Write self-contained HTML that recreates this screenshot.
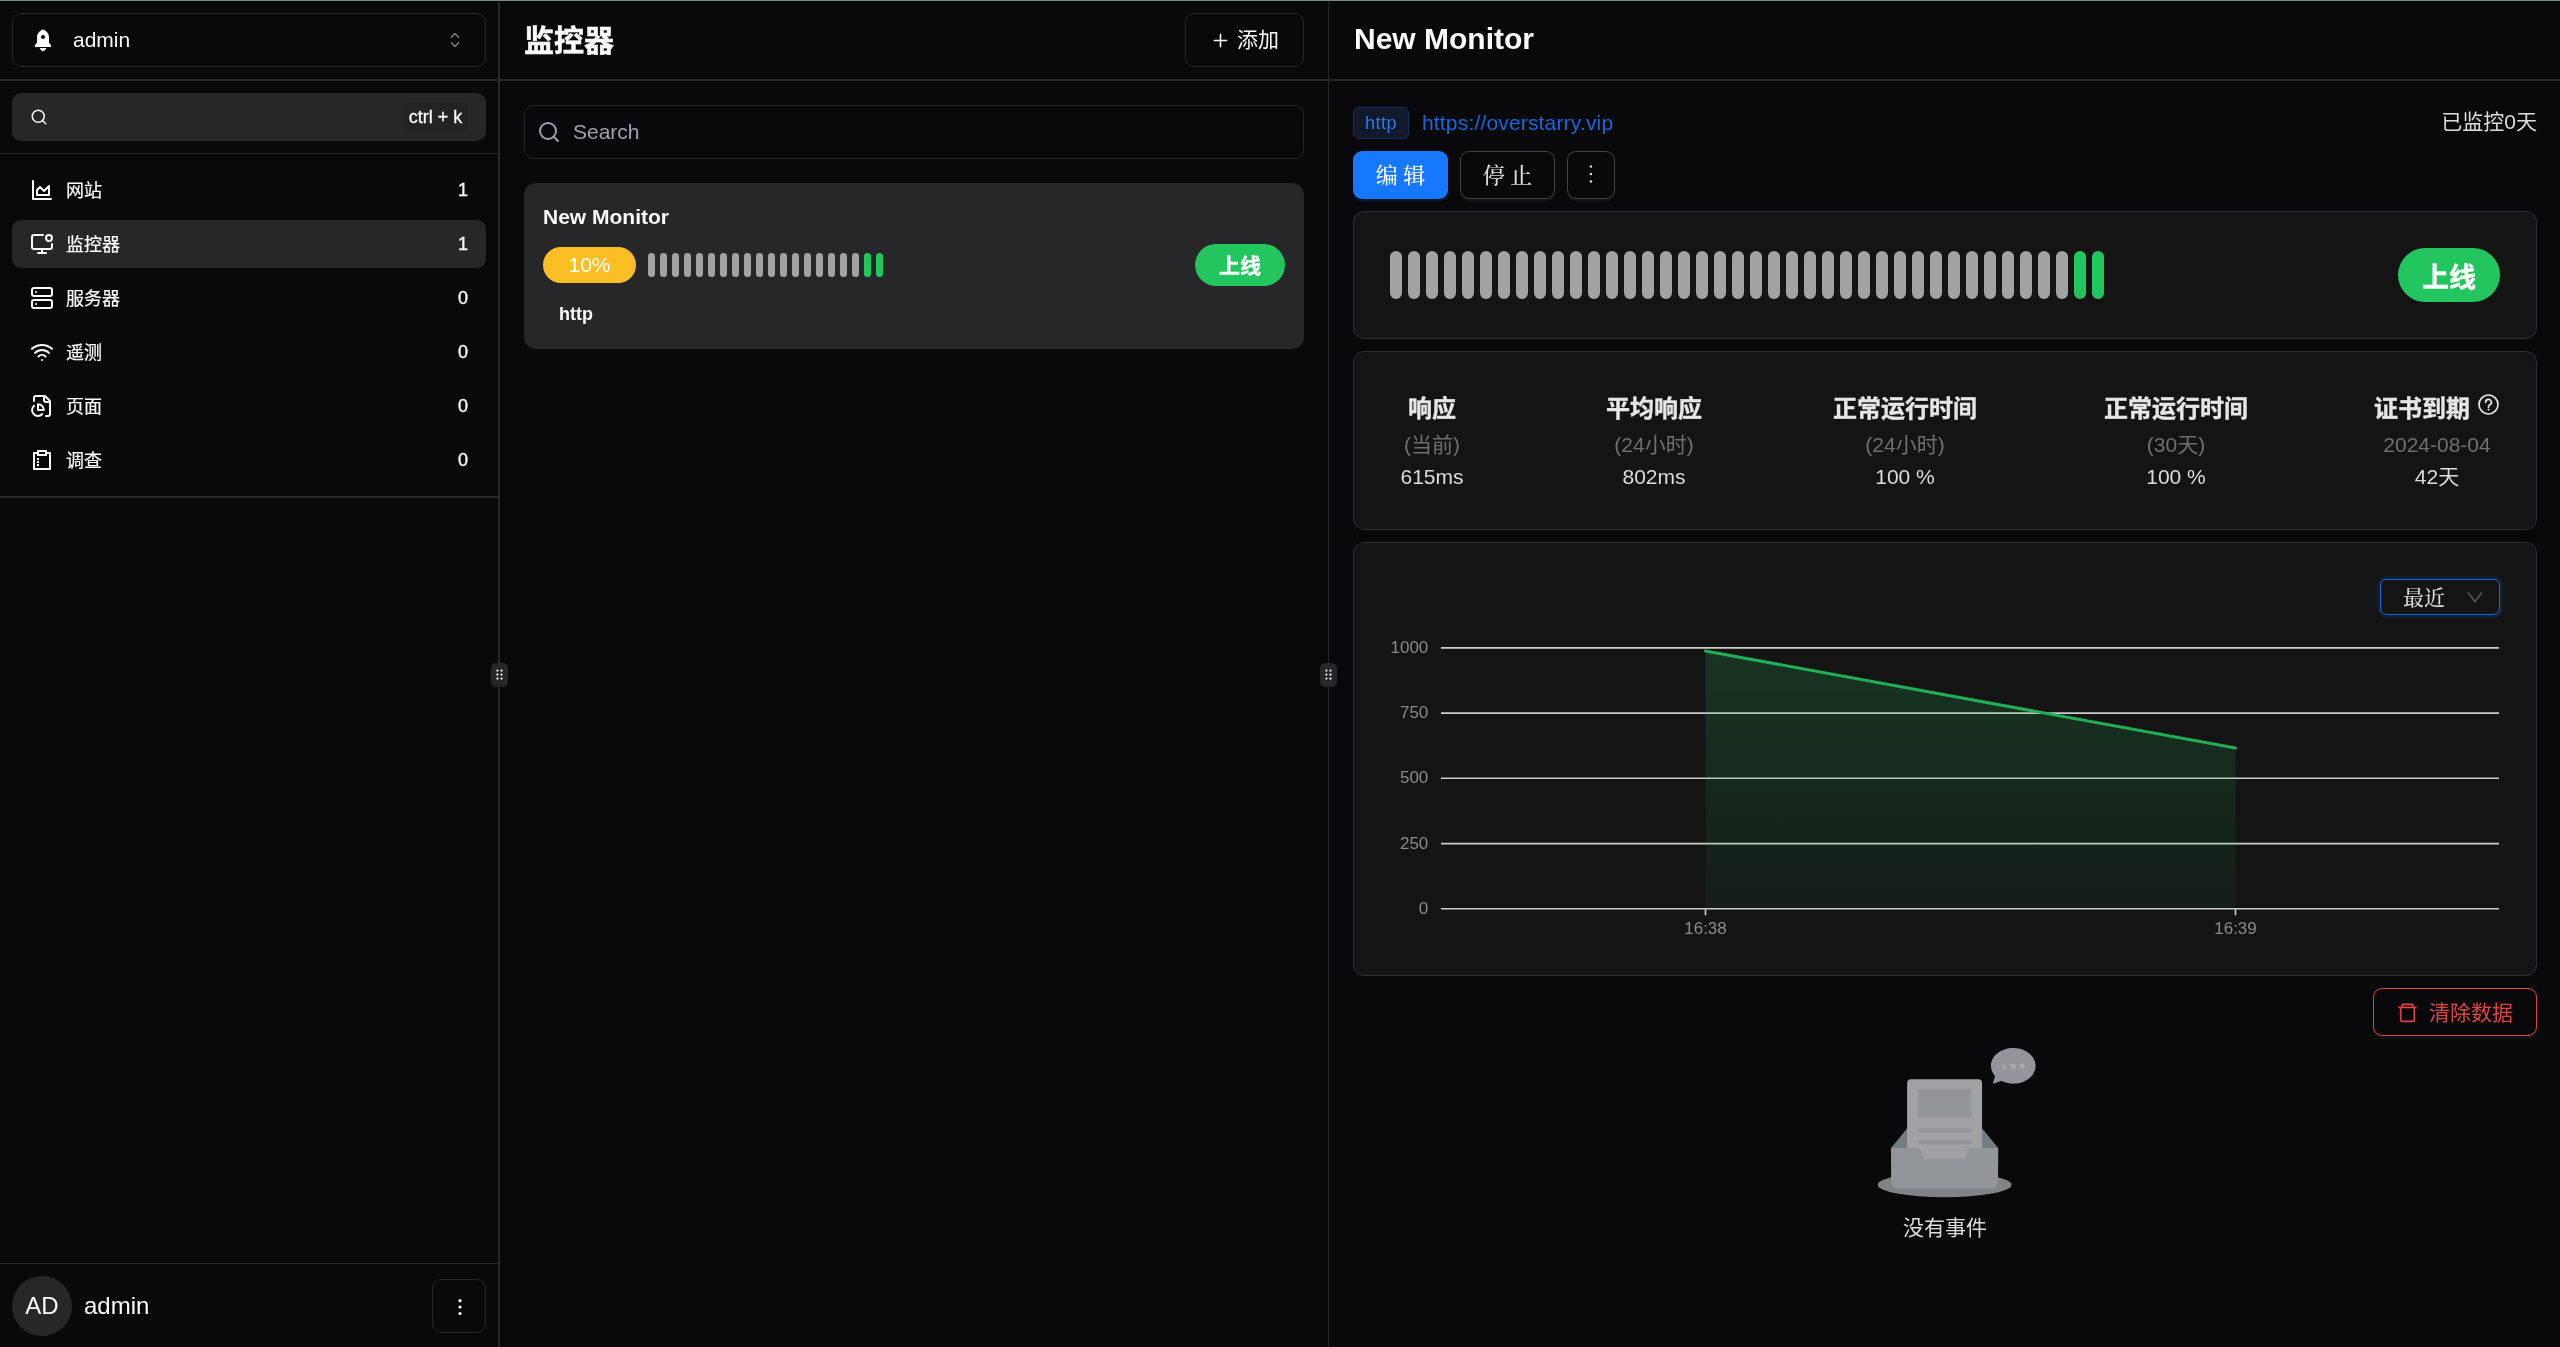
<!DOCTYPE html>
<html lang="zh-CN">
<head>
<meta charset="utf-8">
<title>New Monitor</title>
<style>
*{box-sizing:border-box;margin:0;padding:0}
html,body{width:2560px;height:1347px;overflow:hidden;background:#09090b}
body{position:relative;color:#fafafa;font-family:"Liberation Sans","Noto Sans CJK SC",sans-serif;font-size:21px;-webkit-font-smoothing:antialiased}
.abs{position:absolute}
.flexc{display:flex;align-items:center}
.hline{position:absolute;height:2px;background:#27272a}
.vline{position:absolute;width:2px;background:#27272a}
svg{display:block}
.ic{fill:none;stroke:currentColor;stroke-width:2;stroke-linecap:round;stroke-linejoin:round}
.cjk{font-family:"Liberation Sans","Noto Sans CJK SC",sans-serif}
.song{font-family:"Liberation Serif","Noto Serif CJK SC",serif;font-weight:500}
/* sidebar */
.nav{position:absolute;left:12px;width:474px;height:48px;border-radius:9px;display:flex;align-items:center;padding:0 18px 0 18px;font-size:18px;color:#fafafa}
.nav svg{width:24px;height:24px;margin-right:12px;flex:none}
.nav .lbl{flex:1;line-height:48px;position:relative;top:.6px;-webkit-text-stroke:.2px #fafafa}
.nav .cnt{font-size:18px;-webkit-text-stroke:.35px #fafafa}
.nav.on{background:#27272a}
.bar{position:absolute;border-radius:99px;background:#a3a3a3}
.bar.g{background:#22c55e}
.card{position:absolute;left:1353px;width:1184px;background:#141414;border:1px solid #303030;border-radius:11px}
.stat{position:absolute;top:0;text-align:center;white-space:nowrap;transform:translateX(-50%)}
.stat .t{-webkit-text-stroke:.35px #e6e6e6;font-weight:700;font-size:24px;line-height:36px;color:#e6e6e6;position:absolute;top:39.6px;left:50%;transform:translateX(-50%)}
.stat .s{font-size:21px;line-height:33px;color:#6f6f6f;position:absolute;top:76.6px;left:50%;transform:translateX(-50%)}
.stat .v{font-size:21px;line-height:33px;color:#dcdcdc;position:absolute;top:109.4px;left:50%;transform:translateX(-50%)}
.ylab{position:absolute;right:1131.7px;font-size:17px;line-height:20px;color:#8a8a8a;text-align:right}
</style>
</head>
<body>
<div id="root" style="position:absolute;left:0;top:0;width:2560px;height:1347px;will-change:transform">
<!-- browser top strip -->
<div class="abs" style="left:0;top:0;width:2560px;height:1px;background:#7a8a92"></div>
<div class="abs" style="left:0;top:1px;width:2560px;height:1px;background:#000"></div>

<!-- ================= SIDEBAR ================= -->
<div id="sidebar">
  <!-- workspace select -->
  <div class="abs flexc" style="left:12px;top:13px;width:474px;height:54px;border:1px solid #27272a;border-radius:9px">
    <svg class="abs" style="left:18px;top:14px" width="24" height="24" viewBox="0 0 24 24"><path fill="#fafafa" d="M8.498 20h7.004A6.523 6.523 0 0 1 12 23.502 6.523 6.523 0 0 1 8.498 20zM18 14.805l2 2.268V19H4v-1.927l2-2.268V9c0-3.483 2.504-6.447 6-7.545C15.496 2.553 18 5.517 18 9v5.805zM12 11a2 2 0 1 0 0-4 2 2 0 0 0 0 4z"/></svg>
    <span class="abs" style="left:60px;top:0;line-height:52px;font-size:21px">admin</span>
    <svg class="abs" style="left:430px;top:14px;opacity:.5" width="24" height="24" viewBox="0 0 15 15"><path fill="#fafafa" fill-rule="evenodd" clip-rule="evenodd" d="M4.93179 5.43179C4.75605 5.60753 4.75605 5.89245 4.93179 6.06819C5.10753 6.24392 5.39245 6.24392 5.56819 6.06819L7.49999 4.13638L9.43179 6.06819C9.60753 6.24392 9.89245 6.24392 10.0682 6.06819C10.2439 5.89245 10.2439 5.60753 10.0682 5.43179L7.81819 3.18179C7.73379 3.0974 7.61933 3.04999 7.49999 3.04999C7.38064 3.04999 7.26618 3.0974 7.18179 3.18179L4.93179 5.43179ZM10.0682 9.56819C10.2439 9.39245 10.2439 9.10753 10.0682 8.93179C9.89245 8.75606 9.60753 8.75606 9.43179 8.93179L7.49999 10.8636L5.56819 8.93179C5.39245 8.75606 5.10753 8.75606 4.93179 8.93179C4.75605 9.10753 4.75605 9.39245 4.93179 9.56819L7.18179 11.8182C7.35753 11.9939 7.64245 11.9939 7.81819 11.8182L10.0682 9.56819Z"/></svg>
  </div>
  <div class="hline" style="left:0;top:79px;width:498px"></div>

  <!-- command search -->
  <div class="abs" style="left:12px;top:93px;width:474px;height:48px;background:#27272a;border-radius:9px">
    <svg class="abs ic" style="left:18px;top:15px" width="18" height="18" viewBox="0 0 24 24"><circle cx="11" cy="11" r="8"/><path d="m21 21-4.3-4.3"/></svg>
    <div class="abs" style="left:391px;top:9px;width:65px;height:30px;border-radius:6px;background:#232326;font-size:18px;line-height:30px;text-align:center;-webkit-text-stroke:.3px #fafafa">ctrl + k</div>
  </div>
  <div class="abs" style="left:0;top:153px;width:498px;height:1px;background:#27272a"></div>

  <!-- nav -->
  <div class="nav" style="top:166px">
    <svg class="ic" viewBox="0 0 24 24"><path d="M3 3v18h18"/><path d="M7 12v5h12V8l-5 5-4-4Z"/></svg>
    <span class="lbl">网站</span><span class="cnt">1</span>
  </div>
  <div class="nav on" style="top:220px">
    <svg class="ic" viewBox="0 0 24 24"><circle cx="19" cy="6" r="3"/><path d="M22 12v3a2 2 0 0 1-2 2H4a2 2 0 0 1-2-2V5a2 2 0 0 1 2-2h9"/><path d="M12 17v4"/><path d="M8 21h8"/></svg>
    <span class="lbl">监控器</span><span class="cnt">1</span>
  </div>
  <div class="nav" style="top:274px">
    <svg class="ic" viewBox="0 0 24 24"><rect width="20" height="8" x="2" y="2" rx="2" ry="2"/><rect width="20" height="8" x="2" y="14" rx="2" ry="2"/><line x1="6" x2="6.01" y1="6" y2="6"/><line x1="6" x2="6.01" y1="18" y2="18"/></svg>
    <span class="lbl">服务器</span><span class="cnt">0</span>
  </div>
  <div class="nav" style="top:328px">
    <svg class="ic" viewBox="0 0 24 24"><path d="M12 20h.01"/><path d="M2 8.82a15 15 0 0 1 20 0"/><path d="M5 12.859a10 10 0 0 1 14 0"/><path d="M8.5 16.429a5 5 0 0 1 7 0"/></svg>
    <span class="lbl">遥测</span><span class="cnt">0</span>
  </div>
  <div class="nav" style="top:382px">
    <svg class="ic" viewBox="0 0 24 24"><path d="M16 22h2a2 2 0 0 0 2-2V7l-5-5H6a2 2 0 0 0-2 2v3"/><path d="M14 2v4a2 2 0 0 0 2 2h4"/><path d="M4.04 11.71a5.84 5.84 0 1 0 8.2 8.29"/><path d="M13.83 16A5.83 5.83 0 0 0 8 10.17V16h5.83Z"/></svg>
    <span class="lbl">页面</span><span class="cnt">0</span>
  </div>
  <div class="nav" style="top:436px">
    <svg viewBox="0 0 24 24" fill="#fafafa"><path d="M17 2V4H20.0066C20.5552 4 21 4.44495 21 4.9934V21.0066C21 21.5552 20.5551 22 20.0066 22H3.9934C3.44476 22 3 21.5551 3 21.0066V4.9934C3 4.44476 3.44495 4 3.9934 4H7V2H17ZM7 6H5V20H19V6H17V8H7V6ZM9 16V18H7V16H9ZM9 13V15H7V13H9ZM9 10V12H7V10H9ZM15 4H9V6H15V4Z"/></svg>
    <span class="lbl">调查</span><span class="cnt">0</span>
  </div>
  <div class="abs" style="left:0;top:496px;width:498px;height:2px;background:#27272a"></div>

  <!-- user -->
  <div class="abs" style="left:0;top:1263px;width:498px;height:1px;background:#27272a"></div>
  <div class="abs" style="left:12px;top:1276px;width:60px;height:60px;border-radius:50%;background:#27272a;font-size:24px;line-height:60px;text-align:center">AD</div>
  <div class="abs" style="left:84px;top:1276px;font-size:24px;line-height:60px">admin</div>
  <div class="abs" style="left:432px;top:1279px;width:54px;height:54px;border:1px solid #27272a;border-radius:9px">
    <svg class="abs" style="left:15px;top:14.5px" width="24" height="24" viewBox="0 0 24 24" fill="#fafafa"><circle cx="12" cy="5.7" r="1.6"/><circle cx="12" cy="12" r="1.6"/><circle cx="12" cy="18.5" r="1.6"/></svg>
  </div>
</div>
<div class="vline" style="left:498px;top:2px;height:1345px"></div>

<!-- resize handle 1 -->
<div class="abs" style="left:491px;top:663px;width:17px;height:24px;border-radius:5px;background:#27272a">
  <svg width="17" height="24" viewBox="0 0 17 24" fill="#fafafa"><circle cx="6.4" cy="7.6" r="1.1"/><circle cx="10.5" cy="7.6" r="1.1"/><circle cx="6.4" cy="11.6" r="1.1"/><circle cx="10.5" cy="11.6" r="1.1"/><circle cx="6.4" cy="15.6" r="1.1"/><circle cx="10.5" cy="15.6" r="1.1"/></svg>
</div>

<!-- ================= MIDDLE ================= -->
<div id="middle">
  <div class="abs cjk" style="left:524px;top:13px;font-size:30px;font-weight:700;line-height:55px;-webkit-text-stroke:.5px #fafafa">监控器</div>
  <div class="abs" style="left:1185px;top:13px;width:119px;height:54px;border:1px solid #27272a;border-radius:9px">
    <svg class="abs ic" style="left:24px;top:16px;stroke-width:1.8" width="21" height="21" viewBox="0 0 24 24"><path d="M5 12h14"/><path d="M12 5v14"/></svg>
    <span class="abs" style="left:51px;top:0;line-height:52px;font-size:21px">添加</span>
  </div>
  <div class="hline" style="left:500px;top:79px;width:828px"></div>

  <div class="abs" style="left:524px;top:105px;width:780px;height:54px;border:1px solid #27272a;border-radius:9px">
    <svg class="abs ic" style="left:12px;top:14px;color:#a1a1aa" width="24" height="24" viewBox="0 0 24 24"><circle cx="11" cy="11" r="8"/><path d="m21 21-4.3-4.3"/></svg>
    <span class="abs" style="left:48px;top:0;line-height:52px;font-size:21px;color:#a1a1aa">Search</span>
  </div>

  <div class="abs" id="mcard" style="left:524px;top:183px;width:780px;height:166px;background:#27272a;border-radius:12px">
    <div class="abs" style="left:19px;top:18px;font-size:21px;font-weight:700;line-height:32px">New Monitor</div>
    <div class="abs" style="left:19px;top:64px;width:93px;height:36px;border-radius:18px;background:#fbbf24;color:#fff;font-size:21px;line-height:36px;text-align:center">10%</div>
    <div id="mbars"><div class="bar" style="left:124px;top:70px;width:7px;height:24px"></div><div class="bar" style="left:136px;top:70px;width:7px;height:24px"></div><div class="bar" style="left:148px;top:70px;width:7px;height:24px"></div><div class="bar" style="left:160px;top:70px;width:7px;height:24px"></div><div class="bar" style="left:172px;top:70px;width:7px;height:24px"></div><div class="bar" style="left:184px;top:70px;width:7px;height:24px"></div><div class="bar" style="left:196px;top:70px;width:7px;height:24px"></div><div class="bar" style="left:208px;top:70px;width:7px;height:24px"></div><div class="bar" style="left:220px;top:70px;width:7px;height:24px"></div><div class="bar" style="left:232px;top:70px;width:7px;height:24px"></div><div class="bar" style="left:244px;top:70px;width:7px;height:24px"></div><div class="bar" style="left:256px;top:70px;width:7px;height:24px"></div><div class="bar" style="left:268px;top:70px;width:7px;height:24px"></div><div class="bar" style="left:280px;top:70px;width:7px;height:24px"></div><div class="bar" style="left:292px;top:70px;width:7px;height:24px"></div><div class="bar" style="left:304px;top:70px;width:7px;height:24px"></div><div class="bar" style="left:316px;top:70px;width:7px;height:24px"></div><div class="bar" style="left:328px;top:70px;width:7px;height:24px"></div><div class="bar g" style="left:340px;top:70px;width:7px;height:24px"></div><div class="bar g" style="left:352px;top:70px;width:7px;height:24px"></div></div>
    <div class="abs cjk" style="left:671px;top:61px;width:90px;height:42px;border-radius:21px;background:#22c55e;color:#fff;font-size:21px;font-weight:700;line-height:43px;text-align:center;-webkit-text-stroke:.3px #fff">上线</div>
    <div class="abs" style="left:35px;top:116px;font-size:18px;font-weight:700;line-height:30px">http</div>
  </div>
</div>
<div class="abs" style="left:1328px;top:2px;width:1px;height:1345px;background:#252528"></div>
<!-- resize handle 2 -->
<div class="abs" style="left:1320px;top:663px;width:17px;height:24px;border-radius:5px;background:#27272a">
  <svg width="17" height="24" viewBox="0 0 17 24" fill="#fafafa"><circle cx="6.4" cy="7.6" r="1.1"/><circle cx="10.5" cy="7.6" r="1.1"/><circle cx="6.4" cy="11.6" r="1.1"/><circle cx="10.5" cy="11.6" r="1.1"/><circle cx="6.4" cy="15.6" r="1.1"/><circle cx="10.5" cy="15.6" r="1.1"/></svg>
</div>

<!-- ================= RIGHT ================= -->
<div id="right">
  <div class="abs" style="left:1354px;top:12px;font-size:30px;font-weight:700;line-height:53px">New Monitor</div>
  <div class="hline" style="left:1329px;top:79px;width:1231px"></div>

  <!-- tag + url -->
  <div class="abs" style="left:1353px;top:107px;width:56px;height:32px;border:1px solid #15325b;background:#111a2c;border-radius:6px;color:#2b7ae0;font-size:18px;line-height:30px;letter-spacing:.5px;text-align:center">http</div>
  <div class="abs" style="left:1422px;top:106px;font-size:21px;line-height:33px;letter-spacing:.17px;color:#1668dc">https://overstarry.vip</div>
  <div class="abs" style="right:23px;top:105px;font-size:21px;line-height:33px;color:#dcdcdc">已监控0天</div>

  <!-- buttons -->
  <div class="abs song" style="left:1353px;top:151px;width:95px;height:48px;border-radius:9px;background:#1677ff;color:#fff;font-size:22px;line-height:50px;text-align:center;box-shadow:0 3px 0 rgba(5,60,140,.25)">编 辑</div>
  <div class="abs song" style="left:1460px;top:151px;width:95px;height:48px;border-radius:9px;border:1px solid #424242;color:#dcdcdc;font-size:22px;line-height:48px;text-align:center;box-shadow:0 3px 0 rgba(255,255,255,.04)">停 止</div>
  <div class="abs" style="left:1567px;top:151px;width:48px;height:48px;border-radius:9px;border:1px solid #424242;box-shadow:0 3px 0 rgba(255,255,255,.04)">
    <svg class="abs" style="left:13px;top:12px" width="21" height="21" viewBox="0 0 21 21" fill="#dcdcdc"><circle cx="9.9" cy="2.6" r="1.25"/><circle cx="9.9" cy="10" r="1.25"/><circle cx="9.9" cy="17.5" r="1.25"/></svg>
  </div>

  <!-- bars card -->
  <div class="card" style="top:211px;height:128px"></div>
  <div id="rbars"><div class="bar" style="left:1390px;top:251px;width:12px;height:48px"></div><div class="bar" style="left:1408px;top:251px;width:12px;height:48px"></div><div class="bar" style="left:1426px;top:251px;width:12px;height:48px"></div><div class="bar" style="left:1444px;top:251px;width:12px;height:48px"></div><div class="bar" style="left:1462px;top:251px;width:12px;height:48px"></div><div class="bar" style="left:1480px;top:251px;width:12px;height:48px"></div><div class="bar" style="left:1498px;top:251px;width:12px;height:48px"></div><div class="bar" style="left:1516px;top:251px;width:12px;height:48px"></div><div class="bar" style="left:1534px;top:251px;width:12px;height:48px"></div><div class="bar" style="left:1552px;top:251px;width:12px;height:48px"></div><div class="bar" style="left:1570px;top:251px;width:12px;height:48px"></div><div class="bar" style="left:1588px;top:251px;width:12px;height:48px"></div><div class="bar" style="left:1606px;top:251px;width:12px;height:48px"></div><div class="bar" style="left:1624px;top:251px;width:12px;height:48px"></div><div class="bar" style="left:1642px;top:251px;width:12px;height:48px"></div><div class="bar" style="left:1660px;top:251px;width:12px;height:48px"></div><div class="bar" style="left:1678px;top:251px;width:12px;height:48px"></div><div class="bar" style="left:1696px;top:251px;width:12px;height:48px"></div><div class="bar" style="left:1714px;top:251px;width:12px;height:48px"></div><div class="bar" style="left:1732px;top:251px;width:12px;height:48px"></div><div class="bar" style="left:1750px;top:251px;width:12px;height:48px"></div><div class="bar" style="left:1768px;top:251px;width:12px;height:48px"></div><div class="bar" style="left:1786px;top:251px;width:12px;height:48px"></div><div class="bar" style="left:1804px;top:251px;width:12px;height:48px"></div><div class="bar" style="left:1822px;top:251px;width:12px;height:48px"></div><div class="bar" style="left:1840px;top:251px;width:12px;height:48px"></div><div class="bar" style="left:1858px;top:251px;width:12px;height:48px"></div><div class="bar" style="left:1876px;top:251px;width:12px;height:48px"></div><div class="bar" style="left:1894px;top:251px;width:12px;height:48px"></div><div class="bar" style="left:1912px;top:251px;width:12px;height:48px"></div><div class="bar" style="left:1930px;top:251px;width:12px;height:48px"></div><div class="bar" style="left:1948px;top:251px;width:12px;height:48px"></div><div class="bar" style="left:1966px;top:251px;width:12px;height:48px"></div><div class="bar" style="left:1984px;top:251px;width:12px;height:48px"></div><div class="bar" style="left:2002px;top:251px;width:12px;height:48px"></div><div class="bar" style="left:2020px;top:251px;width:12px;height:48px"></div><div class="bar" style="left:2038px;top:251px;width:12px;height:48px"></div><div class="bar" style="left:2056px;top:251px;width:12px;height:48px"></div><div class="bar g" style="left:2074px;top:251px;width:12px;height:48px"></div><div class="bar g" style="left:2092px;top:251px;width:12px;height:48px"></div></div>
  <div class="abs cjk" style="left:2398px;top:248px;width:102px;height:54px;border-radius:27px;background:#22c55e;color:#fff;font-size:27px;font-weight:700;line-height:60px;text-align:center;-webkit-text-stroke:.4px #fff">上线</div>

  <!-- stats card -->
  <div class="card" style="top:351px;height:179px"></div>
  <div class="abs cjk" style="left:0;top:351px;width:2560px;height:179px">
    <div class="stat" style="left:1432px"><div class="t">响应</div><div class="s">(当前)</div><div class="v">615ms</div></div>
    <div class="stat" style="left:1654px"><div class="t">平均响应</div><div class="s">(24小时)</div><div class="v">802ms</div></div>
    <div class="stat" style="left:1905px"><div class="t">正常运行时间</div><div class="s">(24小时)</div><div class="v">100 %</div></div>
    <div class="stat" style="left:2176px"><div class="t">正常运行时间</div><div class="s">(30天)</div><div class="v">100 %</div></div>
    <div class="stat" style="left:2422px"><div class="t">证书到期</div></div>
    <div class="stat" style="left:2437px"><div class="s">2024-08-04</div><div class="v">42天</div></div>
    <svg class="abs" style="left:2478px;top:43px" width="21" height="21" viewBox="0 0 21 21" fill="none" stroke="#e6e6e6" stroke-width="1.7"><circle cx="10.5" cy="10.5" r="9.5"/><path d="M7.6 8.3a2.9 2.9 0 1 1 4.3 2.5c-.9.5-1.4 1-1.4 2v.4" stroke-linecap="round"/><circle cx="10.5" cy="15.6" r=".6" fill="#e6e6e6" stroke-width="1"/></svg>
  </div>

  <!-- chart card -->
  <div class="card" style="top:542px;height:434px"></div>
  <div class="abs" style="left:2380px;top:579px;width:120px;height:36px;border:1px solid #1668dc;border-radius:6px;box-shadow:0 0 0 3px rgba(5,100,220,.14)">
    <span class="abs song" style="left:22px;top:0;font-size:21px;line-height:36px;color:#dcdcdc">最近</span>
    <svg class="abs" style="left:86px;top:11px" width="16" height="12" viewBox="0 0 16 12" fill="none" stroke="#5a5a5a" stroke-width="1.5"><path d="M1 1.5 8 10.5 15 1.5"/></svg>
  </div>
  <div class="ylab" style="top:638px">1000</div>
  <div class="ylab" style="top:703px">750</div>
  <div class="ylab" style="top:768px">500</div>
  <div class="ylab" style="top:834px">250</div>
  <div class="ylab" style="top:899px">0</div>
  <svg class="abs" style="left:1353px;top:543px" width="1184" height="433" viewBox="1353 543 1184 433">
    <defs><linearGradient id="ag" x1="0" y1="0" x2="0" y2="1"><stop offset="0" stop-color="#22c55e" stop-opacity=".19"/><stop offset="1" stop-color="#22c55e" stop-opacity=".05"/></linearGradient></defs>
    <path d="M1441 647.9H2499M1441 713.1H2499M1441 778.3H2499M1441 843.6H2499M1441 908.8H2499" stroke="#cccccc" stroke-width="1.6" fill="none"/>
    <path d="M1705.5 651 L2235.5 748 L2235.5 909 L1705.5 909Z" fill="url(#ag)"/>
    <path d="M1705.5 651 L2235.5 748" stroke="#22ad57" stroke-width="3" stroke-linecap="round" fill="none"/>
    <path d="M1705.5 909v6.2M2235.5 909v6.2" stroke="#cccccc" stroke-width="1.6"/>
    <text x="1705.5" y="934.3" text-anchor="middle" font-size="17" fill="#8a8a8a">16:38</text>
    <text x="2235.5" y="934.3" text-anchor="middle" font-size="17" fill="#8a8a8a">16:39</text>
  </svg>

  <!-- clear button -->
  <div class="abs" style="left:2373px;top:988px;width:164px;height:48px;border:1px solid #dc4446;border-radius:9px;color:#dc4446;box-shadow:0 3px 0 rgba(255,255,255,.04)">
    <svg class="abs" style="left:23px;top:13px" width="21" height="21" viewBox="0 0 21 21" fill="none" stroke="#dc4446" stroke-width="1.7" stroke-linejoin="round"><path d="M1.2 5.4H19.6"/><path d="M5.3 5.4V2.4H15.7V5.4"/><path d="M3.7 5.4V18a1.4 1.4 0 0 0 1.4 1.4H15.9a1.4 1.4 0 0 0 1.4-1.4V5.4"/></svg>
    <span class="abs cjk" style="left:55px;top:1px;font-size:21px;line-height:46px">清除数据</span>
  </div>

  <!-- empty -->
  <svg class="abs" style="left:1854px;top:1048px;opacity:.65" width="181.6" height="150" viewBox="0 0 184 152">
    <g fill="none" fill-rule="evenodd">
      <g transform="translate(24 31.67)">
        <ellipse fill-opacity=".8" fill="#F5F5F7" cx="67.797" cy="106.89" rx="67.797" ry="12.668"/>
        <path d="M122.034 69.674L98.109 40.229c-1.148-1.386-2.826-2.225-4.593-2.225h-51.44c-1.766 0-3.444.839-4.592 2.225L13.56 69.674v15.383h108.475V69.674z" fill="#AEB8C2"/>
        <path d="M33.83 0h67.933a4 4 0 0 1 4 4v93.344a4 4 0 0 1-4 4H33.83a4 4 0 0 1-4-4V4a4 4 0 0 1 4-4z" fill="#F5F5F7"/>
        <path d="M42.678 9.953h50.237a2 2 0 0 1 2 2V36.91a2 2 0 0 1-2 2H42.678a2 2 0 0 1-2-2V11.953a2 2 0 0 1 2-2zM42.94 49.767h49.713a2.262 2.262 0 1 1 0 4.524H42.94a2.262 2.262 0 0 1 0-4.524zM42.94 61.53h49.713a2.262 2.262 0 1 1 0 4.525H42.94a2.262 2.262 0 0 1 0-4.525zM121.813 105.032c-.775 3.071-3.497 5.36-6.735 5.36H20.515c-3.238 0-5.96-2.29-6.734-5.36a7.309 7.309 0 0 1-.222-1.79V69.675h26.318c2.907 0 5.25 2.448 5.25 5.42v.04c0 2.971 2.37 5.37 5.277 5.37h34.785c2.907 0 5.277-2.421 5.277-5.393V75.1c0-2.972 2.343-5.426 5.25-5.426h26.318v33.569c0 .617-.077 1.216-.221 1.789z" fill="#DCE0E6"/>
      </g>
      <path d="M149.121 33.292l-6.83 2.65a1 1 0 0 1-1.317-1.23l1.937-6.207c-2.589-2.944-4.109-6.534-4.109-10.408C138.802 8.102 148.92 0 161.402 0 173.881 0 184 8.102 184 18.097c0 9.995-10.118 18.097-22.599 18.097-4.528 0-8.744-1.066-12.28-2.902z" fill="#DCE0E6"/>
      <g transform="translate(149.65 15.383)" fill="#FFF">
        <ellipse cx="20.654" cy="3.167" rx="2.849" ry="2.815"/>
        <path d="M5.698 5.63H0L2.898.704zM9.259.704h4.985V5.63H9.259z"/>
      </g>
    </g>
  </svg>
  <div class="abs cjk" style="left:1845px;top:1211px;width:200px;text-align:center;font-size:21px;line-height:33px;color:#dcdcdc">没有事件</div>
</div>

</div>
</body>
</html>
